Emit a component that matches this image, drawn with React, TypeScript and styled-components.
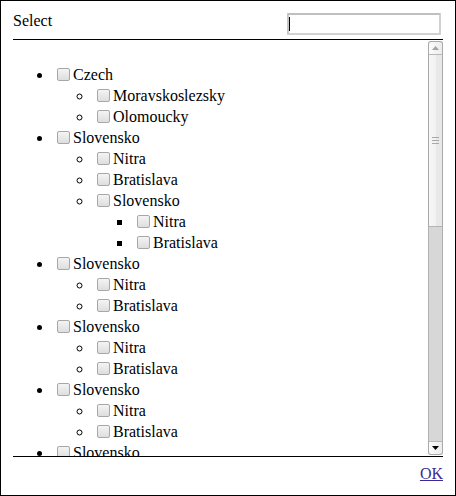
import React, { FC } from 'react';
import styled, { createGlobalStyle } from 'styled-components';

const GlobalStyle = createGlobalStyle`
  html, body {
    margin: 0;
    padding: 0;
    background: #fff;
  }
  body {
    font-family: "Liberation Serif", "Times New Roman", serif;
    font-size: 16px;
    color: #000;
  }
`;

const Panel = styled.div`
  box-sizing: border-box;
  width: 456px;
  height: 496px;
  border: 1px solid #000;
  padding: 11px 12px 12px;
  display: flex;
  flex-direction: column;
`;

const Header = styled.div`
  display: flex;
  justify-content: space-between;
  align-items: flex-start;
  height: 27px;
  flex: 0 0 auto;
`;

const Title = styled.div`
  line-height: 18px;
`;

const SearchBox = styled.div`
  position: relative;
  margin: 1px 2px 0 0;

  /* text caret of the focused field */
  &::after {
    content: '';
    position: absolute;
    left: 2px;
    top: 4px;
    width: 1px;
    height: 14px;
    background: #000;
  }
`;

const SearchInput = styled.input`
  display: block;
  box-sizing: border-box;
  width: 154px;
  height: 22px;
  margin: 0;
  padding: 1px 2px;
  border: 2px solid #d2d2d2;
  border-top-color: #bfbfbf;
  border-left-color: #c6c6c6;
  border-radius: 1px;
  font-family: "Liberation Sans", Arial, sans-serif;
  font-size: 13px;
  caret-color: transparent;
  outline: none;
`;

const ScrollArea = styled.div`
  flex: 0 0 auto;
  height: 416px;
  border-top: 1px solid #000;
  border-bottom: 1px solid #000;
  display: flex;
  flex-direction: row;
`;

const Viewport = styled.div`
  flex: 1 1 auto;
  overflow: hidden;
`;

const Tree = styled.ul`
  margin: 24px 0 0;
  padding-left: 40px;
  list-style-type: disc;

  & & {
    margin: 0;
    list-style-type: circle;
  }

  & & & {
    list-style-type: square;
  }
`;

const Item = styled.li`
  line-height: 21px;
`;

const Check = styled.input`
  appearance: none;
  -webkit-appearance: none;
  box-sizing: border-box;
  width: 13px;
  height: 13px;
  margin: 0 3px 0 4px;
  vertical-align: -1px;
  border: 1px solid #a7a7a7;
  border-radius: 2px;
  background: linear-gradient(#f4f4f4, #dedede);
`;

const Scrollbar = styled.div`
  flex: 0 0 15px;
  display: flex;
  flex-direction: column;
  padding: 1px 0 1px;
`;

const ArrowButton = styled.div<{ $dir: 'up' | 'down' }>`
  box-sizing: border-box;
  height: 14px;
  flex: 0 0 auto;
  display: flex;
  align-items: center;
  justify-content: center;
  border: 1px solid #a9a9a9;
  background: linear-gradient(to right, #fcfcfc, #ececec);
  border-radius: ${(p) => (p.$dir === 'up' ? '3px 3px 0 0' : '0 0 3px 3px')};
  border-${(p) => (p.$dir === 'up' ? 'bottom' : 'top')}-color: #b8b8b8;
`;

const Thumb = styled.div`
  box-sizing: border-box;
  height: 172px;
  flex: 0 0 auto;
  display: flex;
  align-items: center;
  justify-content: center;
  border-left: 1px solid #a9a9a9;
  border-right: 1px solid #a9a9a9;
  border-bottom: 1px solid #b3b3b3;
  background: linear-gradient(to right, #f6f6f6 0%, #f2f2f2 50%, #e8e8e8 51%, #e8e8e8 100%);
`;

const Track = styled.div`
  flex: 1 1 auto;
  border-left: 1px solid #b0b0b0;
  border-right: 1px solid #b0b0b0;
  background: #d7d7d7;
`;

const Footer = styled.div`
  flex: 0 0 auto;
  height: 26px;
  box-sizing: border-box;
  padding-top: 8px;
  line-height: 18px;
  text-align: right;
`;

const OkLink = styled.a`
  color: #3b2b94;
  text-decoration: underline;
  cursor: pointer;
`;

interface INode {
  label: string;
  children?: INode[];
}

const tree: INode[] = [
  { label: 'Czech', children: [{ label: 'Moravskoslezsky' }, { label: 'Olomoucky' }] },
  {
    label: 'Slovensko',
    children: [
      { label: 'Nitra' },
      { label: 'Bratislava' },
      { label: 'Slovensko', children: [{ label: 'Nitra' }, { label: 'Bratislava' }] },
    ],
  },
  { label: 'Slovensko', children: [{ label: 'Nitra' }, { label: 'Bratislava' }] },
  { label: 'Slovensko', children: [{ label: 'Nitra' }, { label: 'Bratislava' }] },
  { label: 'Slovensko', children: [{ label: 'Nitra' }, { label: 'Bratislava' }] },
  { label: 'Slovensko', children: [{ label: 'Nitra' }, { label: 'Bratislava' }] },
  { label: 'Slovensko', children: [{ label: 'Nitra' }, { label: 'Bratislava' }] },
];

const TreeList: FC<{ nodes: INode[] }> = ({ nodes }) => (
  <Tree>
    {nodes.map((node, i) => (
      <Item key={i}>
        <Check type="checkbox" />
        {node.label}
        {node.children && <TreeList nodes={node.children} />}
      </Item>
    ))}
  </Tree>
);

const Arrow: FC<{ dir: 'up' | 'down' }> = ({ dir }) => (
  <svg width="7" height="4" viewBox="0 0 7 4">
    {dir === 'up' ? (
      <polygon points="0,4 7,4 3.5,0" fill="#a3a3a3" />
    ) : (
      <polygon points="0,0 7,0 3.5,4" fill="#000" />
    )}
  </svg>
);

const Grip: FC = () => (
  <svg width="7" height="7" viewBox="0 0 7 7">
    <rect x="0" y="0" width="7" height="1" fill="#a8a8a8" />
    <rect x="0" y="3" width="7" height="1" fill="#a8a8a8" />
    <rect x="0" y="6" width="7" height="1" fill="#a8a8a8" />
  </svg>
);

const App: FC = () => (
  <>
    <GlobalStyle />
    <Panel>
      <Header>
        <Title>Select</Title>
        <SearchBox>
          <SearchInput type="text" />
        </SearchBox>
      </Header>
      <ScrollArea>
        <Viewport>
          <TreeList nodes={tree} />
        </Viewport>
        <Scrollbar>
          <ArrowButton $dir="up">
            <Arrow dir="up" />
          </ArrowButton>
          <Thumb>
            <Grip />
          </Thumb>
          <Track />
          <ArrowButton $dir="down">
            <Arrow dir="down" />
          </ArrowButton>
        </Scrollbar>
      </ScrollArea>
      <Footer>
        <OkLink href="#">OK</OkLink>
      </Footer>
    </Panel>
  </>
);

export default App;
